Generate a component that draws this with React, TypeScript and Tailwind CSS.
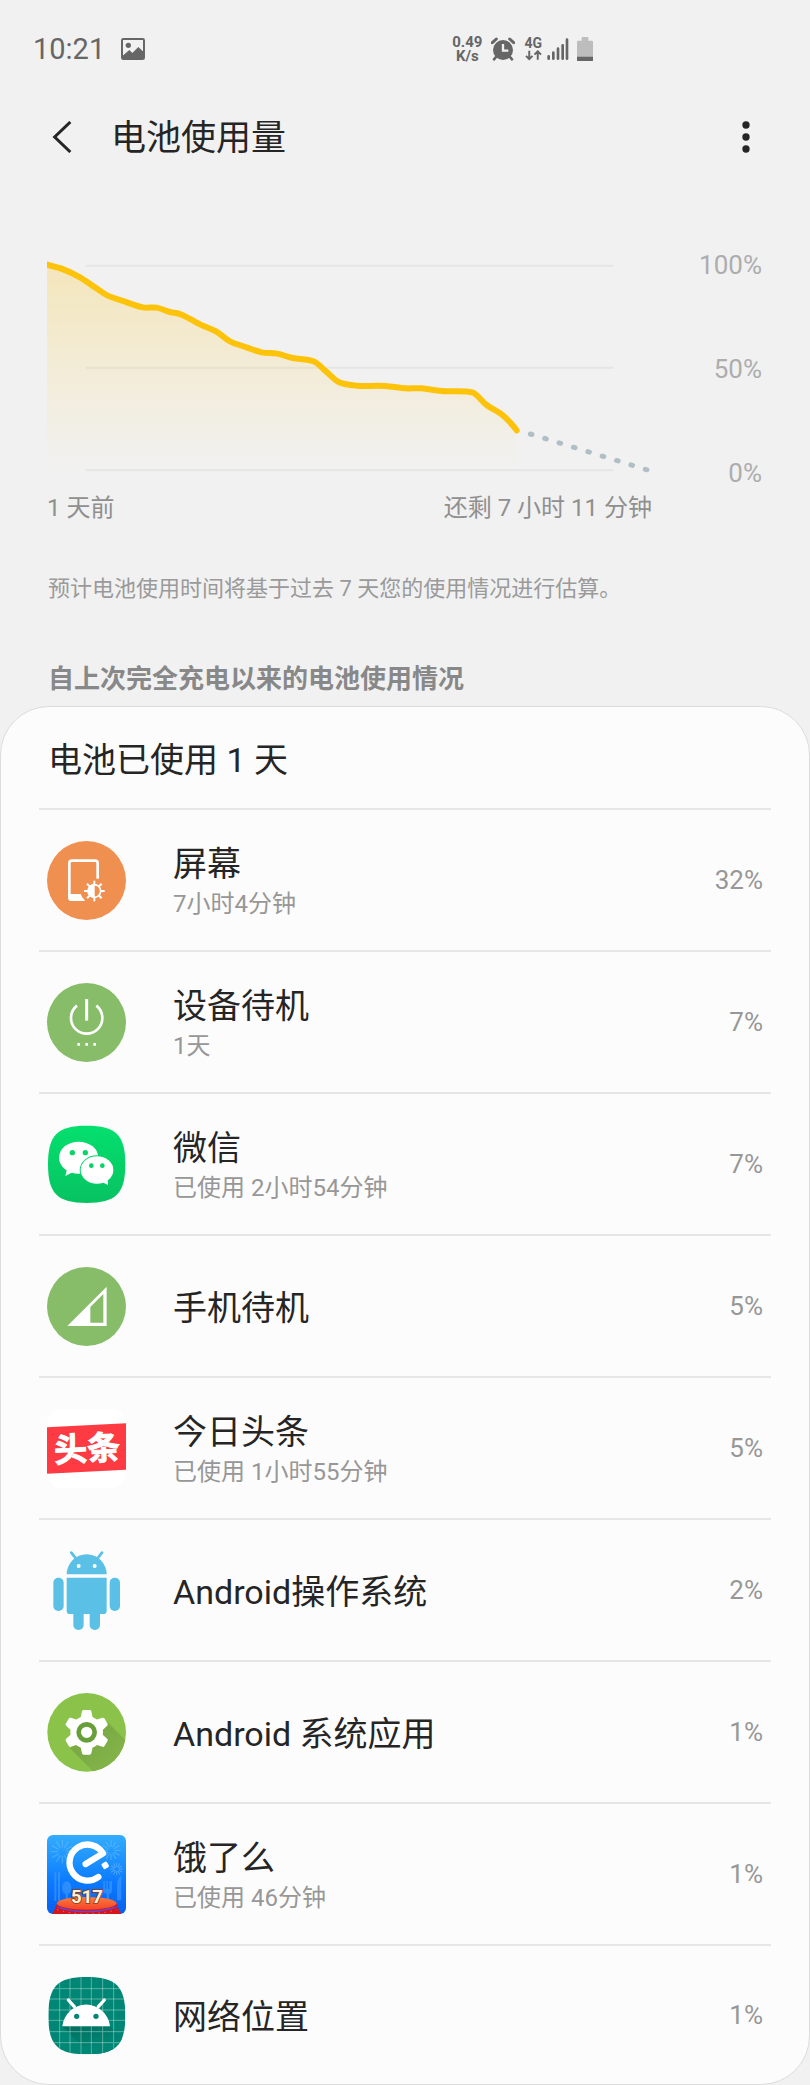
import type { ReactNode } from "react";

type Point = [number, number];

interface UsageItem {
  name: string;
  detail?: string;
  percent: number;
  icon: ReactNode;
}

const history: Point[] = [
  [0, 26], [49, 40], [99, 64], [144, 94], [181, 118], [234, 137], [287, 154], [329, 155],
  [369, 168], [404, 176], [459, 205], [507, 226], [549, 256], [599, 274], [644, 289],
  [691, 293], [737, 306], [799, 316], [837, 346], [877, 379], [929, 389], [1014, 390],
  [1074, 397], [1124, 397], [1184, 405], [1264, 407], [1286, 415], [1319, 447],
  [1364, 475], [1392, 502], [1409, 523],
];

// Catmull-Rom through the samples, written out as cubic segments
function smoothPath(pts: Point[]) {
  let d = `M${pts[0][0]} ${pts[0][1]}`;
  for (let i = 0; i < pts.length - 1; i++) {
    const p0 = pts[Math.max(i - 1, 0)];
    const p1 = pts[i];
    const p2 = pts[i + 1];
    const p3 = pts[Math.min(i + 2, pts.length - 1)];
    const c1 = [p1[0] + (p2[0] - p0[0]) / 6, p1[1] + (p2[1] - p0[1]) / 6];
    const c2 = [p2[0] - (p3[0] - p1[0]) / 6, p2[1] - (p3[1] - p1[1]) / 6];
    d += ` C${c1[0]} ${c1[1]} ${c2[0]} ${c2[1]} ${p2[0]} ${p2[1]}`;
  }
  return d;
}

function BatteryChart() {
  const line = smoothPath(history);
  return (
    <svg viewBox="0 0 1815 672" className="block w-full" role="img" aria-label="电池电量">
      <defs>
        <linearGradient id="usageFill" gradientUnits="userSpaceOnUse" x1="0" y1="26" x2="0" y2="643">
          <stop offset="0" stopColor="#fcc419" stopOpacity="0.25" />
          <stop offset="0.55" stopColor="#fcc419" stopOpacity="0.11" />
          <stop offset="1" stopColor="#fcc419" stopOpacity="0" />
        </linearGradient>
      </defs>
      {[29, 335, 643].map((y) => (
        <path key={y} d={`M117 ${y}H1699`} stroke="#e5e5e5" strokeWidth="6" />
      ))}
      <path d={`${line} V643 H0 Z`} fill="url(#usageFill)" />
      <path
        d="M1450 534 L1802 642"
        stroke="#b0bec5"
        strokeWidth="15"
        strokeLinecap="round"
        strokeDasharray="5 40.1"
      />
      <path d={line} fill="none" stroke="#fdc30b" strokeWidth="18" strokeLinecap="round" strokeLinejoin="round" />
    </svg>
  );
}

function AppIcon({ children }: { children: ReactNode }) {
  return (
    <svg viewBox="0 0 237 237" className="size-[79px] shrink-0" aria-hidden="true">
      {children}
    </svg>
  );
}

function ScreenIcon() {
  return (
    <AppIcon>
      <circle cx="118.5" cy="118.5" r="118.5" fill="#ef9051" />
      <path d="M152 113V67q0-8-8-8H75q-8 0-8 8v101q0 8 8 8h34" fill="none" stroke="#fff" strokeWidth="8" />
      <path d="M64 159h37l6 12 8 9H74q-10 0-10-10z" fill="#fff" />
      {[0, 45, 90, 135, 180, 225, 270, 315].map((a) => (
        <path key={a} d="M142 119v12" stroke="#fff" strokeWidth="6" transform={`rotate(${a} 142 150)`} />
      ))}
      <circle cx="142" cy="150" r="19" fill="none" stroke="#fff" strokeWidth="5" />
      <path d="M143 130a20 20 0 0 0 0 40z" fill="#fff" />
    </AppIcon>
  );
}

function StandbyIcon() {
  return (
    <AppIcon>
      <circle cx="118.5" cy="118.5" r="118.5" fill="#87bd68" />
      <path d="M90 68A47 47 0 1 0 148 68" fill="none" stroke="#fff" strokeWidth="8" />
      <path d="M119 48v65" stroke="#fff" strokeWidth="9" />
      <path d="M91 184h8M115 184h8M139 184h8" stroke="#fff" strokeWidth="8" />
    </AppIcon>
  );
}

function WeChatIcon() {
  return (
    <AppIcon>
      <defs>
        <linearGradient id="wechatFill" x1="0" y1="0" x2="0" y2="1">
          <stop offset="0" stopColor="#04e06e" />
          <stop offset="1" stopColor="#07c261" />
        </linearGradient>
      </defs>
      <path
        d="M119 2C207 2 235 30 235 118S207 234 119 234 3 206 3 118 31 2 119 2z"
        fill="url(#wechatFill)"
      />
      <ellipse cx="95" cy="98" rx="59" ry="48" fill="#fff" />
      <path d="M60 132l-5 21 23-12z" fill="#fff" />
      <ellipse cx="150" cy="135" rx="52" ry="44" fill="#06d267" />
      <ellipse cx="150" cy="135" rx="49" ry="41" fill="#fff" />
      <path d="M182 162l1 18-20-10z" fill="#fff" />
      <circle cx="76" cy="83" r="8" fill="#06d568" />
      <circle cx="115" cy="83" r="8" fill="#06d568" />
      <circle cx="133" cy="122" r="7" fill="#06d267" />
      <circle cx="166" cy="122" r="7" fill="#06d267" />
    </AppIcon>
  );
}

function CellIcon() {
  return (
    <AppIcon>
      <circle cx="118.5" cy="118.5" r="118.5" fill="#87bd68" />
      <path d="M61 177L179 59V177zM130 120V167H169V81z" fill="#fff" fillRule="evenodd" />
    </AppIcon>
  );
}

function ToutiaoIcon() {
  return (
    <AppIcon>
      <rect width="237" height="237" rx="46" fill="#fff" />
      <path d="M0 55L237 43V182L0 194z" fill="#fe3b42" />
      <text
        x="120"
        y="155"
        fontSize="99"
        fontWeight="700"
        textAnchor="middle"
        fill="#fff"
        stroke="#fff"
        strokeWidth="3"
        transform="rotate(-3 119 118)"
      >
        头条
      </text>
    </AppIcon>
  );
}

function AndroidIcon() {
  return (
    <AppIcon>
      <g fill="#5ac0e6">
        <path d="M59 70a60 60 0 0 1 120 0z" />
        <path d="M73 5l14 18M165 5l-14 18" stroke="#5ac0e6" strokeWidth="8" strokeLinecap="round" />
        <path d="M59 80H179V179q0 10-10 10H69q-10 0-10-10z" />
        <rect x="19" y="80" width="31" height="100" rx="15" />
        <rect x="188" y="80" width="31" height="100" rx="15" />
        <rect x="79" y="150" width="31" height="87" rx="15" />
        <rect x="128" y="150" width="31" height="87" rx="15" />
      </g>
      <circle cx="95" cy="45" r="6" fill="#fff" />
      <circle cx="143" cy="45" r="6" fill="#fff" />
    </AppIcon>
  );
}

function SystemIcon() {
  return (
    <AppIcon>
      <defs>
        <clipPath id="systemClip">
          <circle cx="119" cy="118" r="118" />
        </clipPath>
        <linearGradient id="systemShade" x1="0" y1="0" x2="1" y2="1">
          <stop offset="0.4" stopColor="#7cab46" />
          <stop offset="1" stopColor="#88bb4a" />
        </linearGradient>
      </defs>
      <circle cx="119" cy="118" r="118" fill="#8bc34a" />
      <path d="M69 166L182 88 250 156V250H153z" fill="url(#systemShade)" clipPath="url(#systemClip)" />
      <circle cx="119" cy="118" r="49" fill="#fff" />
      {[0, 60, 120, 180, 240, 300].map((a) => (
        <path
          key={a}
          d="M105 55q1-4 5-4h18q4 0 5 4l4 19 10 8H91l10-8z"
          fill="#fff"
          transform={`rotate(${a} 119 118)`}
        />
      ))}
      <circle cx="119" cy="118" r="24" fill="#fff" stroke="#679f38" strokeWidth="14" />
    </AppIcon>
  );
}

function Firework({ x, y, r }: { x: number; y: number; r: number }) {
  return (
    <g stroke="#7cc4ff" strokeWidth="3" strokeLinecap="round" opacity="0.5">
      {[0, 30, 60, 90, 120, 150, 180, 210, 240, 270, 300, 330].map((a) => (
        <path key={a} d={`M${x} ${y - r}v${r * 0.6}`} transform={`rotate(${a} ${x} ${y})`} />
      ))}
    </g>
  );
}

function ElemeIcon() {
  return (
    <AppIcon>
      <defs>
        <linearGradient id="elemeFill" x1="0" y1="0" x2="0" y2="1">
          <stop offset="0" stopColor="#33adfd" />
          <stop offset="0.6" stopColor="#0b7aff" />
          <stop offset="1" stopColor="#0560f0" />
        </linearGradient>
        <linearGradient id="elemeStage" x1="0" y1="0" x2="0" y2="1">
          <stop offset="0" stopColor="#ff7a3c" />
          <stop offset="1" stopColor="#f4442a" />
        </linearGradient>
        <clipPath id="elemeClip">
          <rect width="237" height="237" rx="18" />
        </clipPath>
      </defs>
      <g clipPath="url(#elemeClip)">
        <rect width="237" height="237" fill="url(#elemeFill)" />
        <Firework x={46} y={50} r={34} />
        <Firework x={192} y={46} r={28} />
        <Firework x={209} y={102} r={18} />
        <g fill="#4ea4ff" opacity="0.5">
          <rect x="22" y="112" width="6" height="86" />
          <rect x="33" y="112" width="6" height="86" />
          <ellipse cx="59" cy="158" rx="14" ry="19" />
          <rect x="56" y="170" width="7" height="34" />
          <path d="M169 138h5v24h4v-24h5v24h4v-24h8v28q0 10-9 11v24h-7v-24q-10-1-10-11zM210 196v-50q3-17 13-25v75z" />
        </g>
        <path
          d="M154 126A54 54 0 1 1 168 55L116 87"
          fill="none"
          stroke="#fff"
          strokeWidth="19"
          strokeLinecap="round"
          strokeLinejoin="round"
        />
        <rect x="165" y="82" width="19" height="19" rx="5" fill="#fff" transform="rotate(-32 174 91)" />
        <path d="M30 206Q24 224 15 237H223Q214 224 209 206z" fill="#d3151c" />
        <ellipse cx="119" cy="205" rx="90" ry="19" fill="url(#elemeStage)" />
        <path d="M30 216q89 28 179 0" fill="none" stroke="#6f45c7" strokeWidth="4" />
        <path d="M30 224q89 26 179 0" fill="none" stroke="#ff7468" strokeWidth="3" strokeDasharray="4 14" />
        <text
          x="120"
          y="204"
          fontSize="56"
          fontWeight="700"
          textAnchor="middle"
          fill="#fff1cf"
          stroke="#8c3a22"
          strokeWidth="5"
          paintOrder="stroke"
        >
          517
        </text>
      </g>
    </AppIcon>
  );
}

function LocationIcon() {
  return (
    <AppIcon>
      <defs>
        <clipPath id="locationClip">
          <path d="M119 3C207 3 235 31 235 119S207 235 119 235 4 207 4 119 31 3 119 3z" />
        </clipPath>
        <linearGradient id="locationShade" x1="0" y1="0" x2="0.6" y2="1">
          <stop offset="0" stopColor="#02705f" />
          <stop offset="0.8" stopColor="#038676" />
        </linearGradient>
      </defs>
      <g clipPath="url(#locationClip)">
        <rect width="237" height="237" fill="#038676" />
        <path d="M46 151H189L237 199V237H132z" fill="url(#locationShade)" />
        {[38, 69, 102, 133, 167, 200].map((p) => (
          <path key={p} d={`M${p} 0V237M0 ${p}H237`} stroke="#fff" strokeWidth="3" opacity="0.35" />
        ))}
      </g>
      <path d="M46 151a72 74 0 0 1 143 0z" fill="#fff" />
      <path d="M64 72l18 20M172 72l-18 20" stroke="#fff" strokeWidth="10" strokeLinecap="round" />
      <circle cx="89" cy="121" r="8" fill="#038676" />
      <circle cx="147" cy="121" r="8" fill="#038676" />
    </AppIcon>
  );
}

const items: UsageItem[] = [
  { name: "屏幕", detail: "7小时4分钟", percent: 32, icon: <ScreenIcon /> },
  { name: "设备待机", detail: "1天", percent: 7, icon: <StandbyIcon /> },
  { name: "微信", detail: "已使用 2小时54分钟", percent: 7, icon: <WeChatIcon /> },
  { name: "手机待机", percent: 5, icon: <CellIcon /> },
  { name: "今日头条", detail: "已使用 1小时55分钟", percent: 5, icon: <ToutiaoIcon /> },
  { name: "Android操作系统", percent: 2, icon: <AndroidIcon /> },
  { name: "Android 系统应用", percent: 1, icon: <SystemIcon /> },
  { name: "饿了么", detail: "已使用 46分钟", percent: 1, icon: <ElemeIcon /> },
  { name: "网络位置", percent: 1, icon: <LocationIcon /> },
];

function StatusBar() {
  return (
    <div className="flex h-[98px] items-center justify-between pl-[33px] pr-[217px] text-[#666]">
      <div className="flex items-center gap-4">
        <span className="text-[29px] leading-9">10:21</span>
        <svg viewBox="0 0 72 66" className="w-6" aria-hidden="true">
          <rect x="3" y="3" width="66" height="60" rx="4" fill="none" stroke="#666" strokeWidth="6" />
          <circle cx="22" cy="22" r="8" fill="#666" />
          <path d="M4 54L25 36 34 45 52 27 68 42V62H4z" fill="#666" />
        </svg>
      </div>
      <div className="flex items-center">
        <div className="text-center text-[15px] font-bold leading-[14px]">
          <p>0.49</p>
          <p>K/s</p>
        </div>
        <svg viewBox="0 0 72 72" className="ml-[9px] w-6" aria-hidden="true">
          <circle cx="36" cy="39" r="30" fill="#666" />
          <path d="M4 17L16 6M68 17L56 6" stroke="#666" strokeWidth="9" strokeLinecap="round" />
          <path d="M15 60L9 67M57 60L63 67" stroke="#666" strokeWidth="8" strokeLinecap="round" />
          <path d="M36 21V41H52" fill="none" stroke="#f1f1f1" strokeWidth="7" />
        </svg>
        <div className="ml-[9px] flex flex-col items-center">
          <span className="text-[14px] font-bold leading-[13px]">4G</span>
          <svg viewBox="0 0 52 32" className="w-[17px]" aria-hidden="true">
            <path
              d="M13 2V26M3 18L13 28 23 18M39 30V6M29 14L39 4 49 14"
              fill="none"
              stroke="#666"
              strokeWidth="6"
            />
          </svg>
        </div>
        <svg viewBox="0 0 66 66" className="ml-[5px] w-[22px]" aria-hidden="true">
          <path
            d="M5 55V62M19 44V62M33 32V62M47 22V62M60 5V62"
            stroke="#666"
            strokeWidth="8"
            strokeLinecap="round"
          />
        </svg>
        <svg viewBox="0 0 48 74" className="ml-2 w-4" aria-hidden="true">
          <path d="M14 2q0-2 2-2h16q2 0 2 2v9h11q3 0 3 3v46H0V14q0-3 3-3h11z" fill="#bdbdbd" />
          <path d="M0 59H48V70q0 4-4 4H4q-4 0-4-4z" fill="#666" />
        </svg>
      </div>
    </div>
  );
}

export default function App() {
  return (
    <main className="min-h-screen bg-[#f1f1f1] font-['Roboto','Noto_Sans_CJK_SC',sans-serif]" lang="zh-CN">
      <StatusBar />

      <header className="flex h-[78px] items-center pl-[50px] pr-[50px]">
        <button type="button" aria-label="返回" className="mr-[37px] flex h-12 w-6 items-center">
          <svg viewBox="0 0 72 96" className="h-8 w-6" aria-hidden="true">
            <path d="M61 3L14 48 61 93" fill="none" stroke="#252525" strokeWidth="9" />
          </svg>
        </button>
        <h1 className="flex-1 pt-1 text-[35px] leading-[44px] text-[#252525]">电池使用量</h1>
        <button type="button" aria-label="更多选项" className="flex h-12 w-7 items-center justify-center">
          <svg viewBox="0 0 24 96" className="h-8 w-2" aria-hidden="true">
            <circle cx="12" cy="12" r="11" fill="#252525" />
            <circle cx="12" cy="48" r="11" fill="#252525" />
            <circle cx="12" cy="84" r="11" fill="#252525" />
          </svg>
        </button>
      </header>

      <section className="mt-[71px] flex pl-[47px] pr-12">
        <div className="min-w-0 flex-1 pt-[9px]">
          <BatteryChart />
          <div className="mt-[10px] flex justify-between text-[24px] leading-9 text-[#8f8f8f]">
            <span>1 天前</span>
            <span>还剩 7 小时 11 分钟</span>
          </div>
        </div>
        <div className="flex h-[244px] w-[110px] flex-col justify-between text-right text-[26px] leading-9 text-[#adadad]">
          <span>100%</span>
          <span>50%</span>
          <span>0%</span>
        </div>
      </section>

      <p className="mt-[45px] px-12 text-[22px] leading-9 text-[#9a9a9a]">
        预计电池使用时间将基于过去 7 天您的使用情况进行估算。
      </p>
      <h2 className="mt-[54px] px-12 text-[26px] font-bold leading-9 text-[#888]">
        自上次完全充电以来的电池使用情况
      </h2>

      <section className="mt-[9px] rounded-[49px] border border-[#dcdcdc] bg-[#fcfcfc] px-[38px]">
        <h3 className="flex h-[101px] items-center px-[9px] pt-1 text-[34px] leading-[44px] text-[#252525]">
          电池已使用 1 天
        </h3>
        <ul>
          {items.map((item) => (
            <li key={item.name} className="h-[142px] border-t-2 border-[#e6e6e6] last:h-[140px]">
              <button type="button" className="flex h-full w-full items-center px-2 text-left">
                {item.icon}
                <span className="ml-[47px] flex flex-1 flex-col pt-1">
                  <span className="text-[34px] leading-[44px] text-[#252525]">{item.name}</span>
                  {item.detail && (
                    <span className="text-[24px] leading-9 text-[#979797]">{item.detail}</span>
                  )}
                </span>
                <span className="text-[26px] leading-9 text-[#979797]">{item.percent}%</span>
              </button>
            </li>
          ))}
        </ul>
      </section>
    </main>
  );
}
